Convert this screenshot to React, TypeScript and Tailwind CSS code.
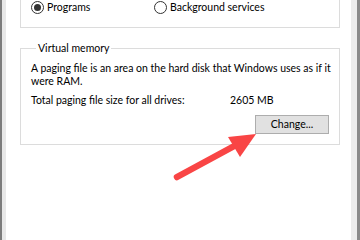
import React from 'react';

const font = { fontFamily: 'Lato, "Liberation Sans", Arial, sans-serif' };

const Radio = ({ checked, label }: { checked?: boolean; label: string }) => (
  <label className="flex items-center gap-[3px]">
    <span className="flex h-[13px] w-[13px] items-center justify-center rounded-full border border-[#333] bg-white">
      {checked && <span className="h-[7px] w-[7px] rounded-full bg-[#333]" />}
    </span>
    <span>{label}</span>
  </label>
);

export default function App() {
  return (
    <div
      className="relative flex h-[240px] w-[360px] overflow-hidden bg-white text-[10.5px] leading-[13px] text-black"
      style={font}
    >
      <div className="flex w-[6px] shrink-0">
        <div className="w-[2px] bg-[#7c7c7c]" />
        <div className="w-[4px] bg-[#e8e8e8]" />
      </div>

      <div className="flex flex-1 flex-col pl-[14px] pr-[11px]">
        <div className="flex h-[28px] items-start border-x border-b border-[#dcdcdc] pl-[10px] pt-[1px]">
          <div className="w-[123px]">
            <Radio checked label="Programs" />
          </div>
          <Radio label="Background services" />
        </div>

        <fieldset className="mt-[13px] h-[104px] border border-[#dcdcdc] pl-[10px] pr-0">
          <legend className="ml-[5px] px-[2px] leading-[14px]">Virtual memory</legend>
          <p className="mt-[7px] w-[306px]">
            A paging file is an area on the hard disk that Windows uses as if it were RAM.
          </p>
          <div className="mt-[6px] flex">
            <span className="w-[199px]">Total paging file size for all drives:</span>
            <span>2605 MB</span>
          </div>
          <div className="mt-[8px] flex justify-end pr-[10px]">
            <button className="h-[19px] w-[74px] border border-[#adadad] bg-[#e1e1e1] leading-[17px]">
              Change...
            </button>
          </div>
        </fieldset>
      </div>

      <div className="flex w-[9px] shrink-0">
        <div className="w-[6px] bg-[#ececec]" />
        <div className="w-[3px] bg-[#8a8a8a]" />
      </div>

      <svg className="absolute inset-0" width="360" height="240" viewBox="0 0 360 240">
        <line x1="177" y1="177" x2="238" y2="144" stroke="#f94545" strokeWidth="6.5" strokeLinecap="round" />
        <polygon points="256,134 228,137 240,157" fill="#f94545" />
      </svg>
    </div>
  );
}
